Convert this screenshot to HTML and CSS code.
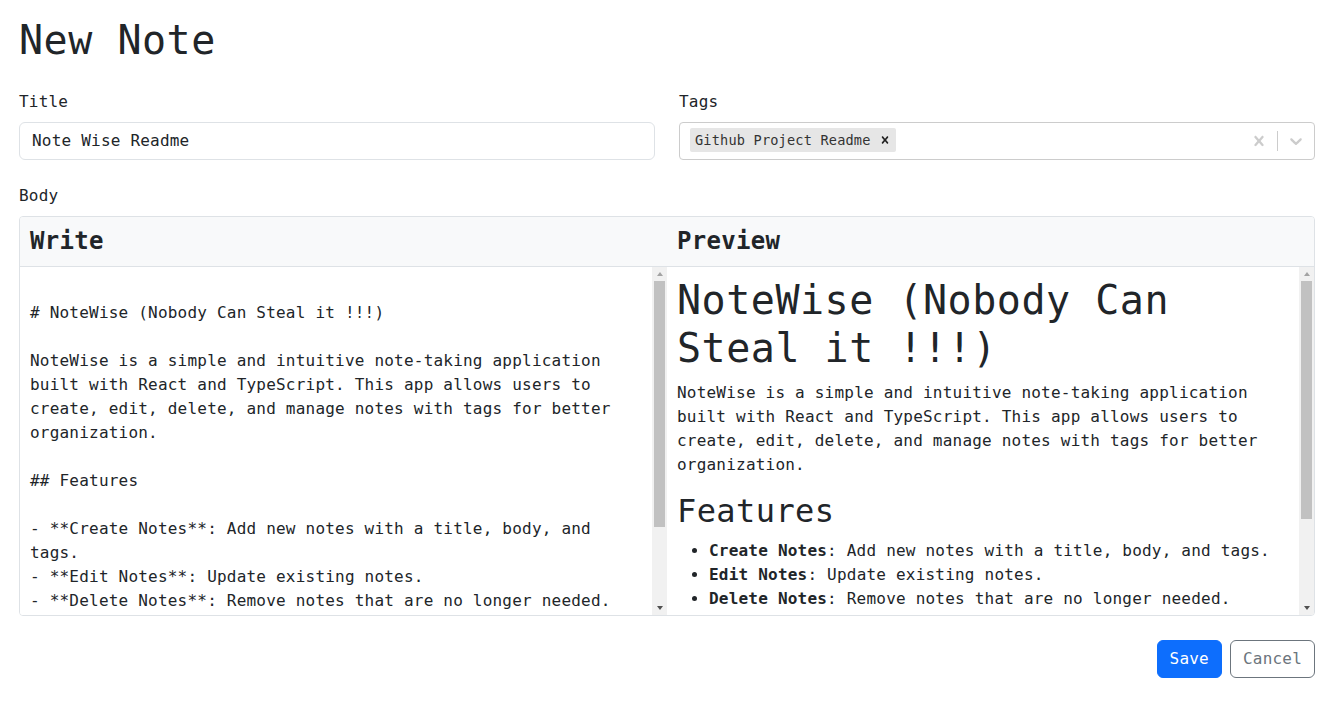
FILE: index.html
```html
<!DOCTYPE html>
<html lang="en">
<head>
<meta charset="utf-8">
<title>New Note</title>
<link rel="stylesheet" href="styles.css">
</head>
<body>
<main class="page">
  <h1 class="page-title">New Note</h1>
  <div class="fields">
    <div class="field">
      <label class="field-label">Title</label>
      <input class="text-input" type="text" value="Note Wise Readme">
    </div>
    <div class="field">
      <label class="field-label">Tags</label>
      <div class="select">
        <div class="select-values">
          <div class="chip">
            <span class="chip-label">Github Project Readme</span>
            <span class="chip-remove"><svg viewBox="0 0 20 20" width="14" height="14"><path d="M14.348 14.849c-0.469 0.469-1.229 0.469-1.697 0l-2.651-3.030-2.651 3.029c-0.469 0.469-1.229 0.469-1.697 0-0.469-0.469-0.469-1.229 0-1.697l2.758-3.15-2.759-3.152c-0.469-0.469-0.469-1.228 0-1.697s1.228-0.469 1.697 0l2.652 3.031 2.651-3.031c0.469-0.469 1.228-0.469 1.697 0s0.469 1.229 0 1.697l-2.758 3.152 2.758 3.15c0.469 0.469 0.469 1.229 0 1.698z"/></svg></span>
          </div>
        </div>
        <div class="select-indicators">
          <span class="indicator"><svg viewBox="0 0 20 20" width="20" height="20"><path d="M14.348 14.849c-0.469 0.469-1.229 0.469-1.697 0l-2.651-3.030-2.651 3.029c-0.469 0.469-1.229 0.469-1.697 0-0.469-0.469-0.469-1.229 0-1.697l2.758-3.15-2.759-3.152c-0.469-0.469-0.469-1.228 0-1.697s1.228-0.469 1.697 0l2.652 3.031 2.651-3.031c0.469-0.469 1.228-0.469 1.697 0s0.469 1.229 0 1.697l-2.758 3.152 2.758 3.150c0.469 0.469 0.469 1.229 0 1.698z"/></svg></span>
          <span class="separator"></span>
          <span class="indicator"><svg viewBox="0 0 20 20" width="20" height="20"><path d="M4.516 7.548c0.436-0.446 1.043-0.481 1.576 0l3.908 3.747 3.908-3.747c0.533-0.481 1.141-0.446 1.574 0 0.436 0.445 0.408 1.197 0 1.615-0.406 0.418-4.695 4.502-4.695 4.502-0.217 0.223-0.502 0.335-0.787 0.335s-0.57-0.112-0.789-0.335c0 0-4.287-4.084-4.695-4.502s-0.436-1.17 0-1.615z"/></svg></span>
        </div>
      </div>
    </div>
  </div>

  <label class="field-label">Body</label>
  <div class="editor">
    <div class="editor-head">
      <h4 class="pane-title">Write</h4>
      <h4 class="pane-title">Preview</h4>
    </div>
    <div class="editor-body">
      <div class="pane">
        <textarea class="source">

# NoteWise (Nobody Can Steal it !!!)

NoteWise is a simple and intuitive note-taking application built with React and TypeScript. This app allows users to create, edit, delete, and manage notes with tags for better organization.

## Features

- **Create Notes**: Add new notes with a title, body, and tags.
- **Edit Notes**: Update existing notes.
- **Delete Notes**: Remove notes that are no longer needed.
- **Tag Management**: Organize notes with tags.
- **Search Notes**: Filter notes by title and tags.</textarea>
        <div class="scrollbar">
          <span class="sb-btn"><span class="arrow-up"></span></span>
          <span class="sb-track"><span class="sb-thumb thumb-write"></span></span>
          <span class="sb-btn"><span class="arrow-down"></span></span>
        </div>
      </div>
      <div class="pane">
        <div class="preview">
          <h1>NoteWise (Nobody Can Steal it !!!)</h1>
          <p>NoteWise is a simple and intuitive note-taking application built with React and TypeScript. This app allows users to create, edit, delete, and manage notes with tags for better organization.</p>
          <h2>Features</h2>
          <ul>
            <li><strong>Create Notes</strong>: Add new notes with a title, body, and tags.</li>
            <li><strong>Edit Notes</strong>: Update existing notes.</li>
            <li><strong>Delete Notes</strong>: Remove notes that are no longer needed.</li>
            <li><strong>Tag Management</strong>: Organize notes with tags.</li>
            <li><strong>Search Notes</strong>: Filter notes by title and tags.</li>
          </ul>
        </div>
        <div class="scrollbar">
          <span class="sb-btn"><span class="arrow-up"></span></span>
          <span class="sb-track"><span class="sb-thumb thumb-preview"></span></span>
          <span class="sb-btn"><span class="arrow-down"></span></span>
        </div>
      </div>
    </div>
  </div>

  <div class="actions">
    <button class="btn btn-primary" type="button">Save</button>
    <button class="btn btn-outline" type="button">Cancel</button>
  </div>
</main>
</body>
</html>
```

FILE: styles.css
```css
* {
  box-sizing: border-box;
  letter-spacing: 0.013em;
}

html, body {
  margin: 0;
  padding: 0;
  background: #fff;
}

body {
  font-family: "DejaVu Sans Mono", "Liberation Mono", monospace;
  font-size: 16px;
  line-height: 24px;
  color: #212529;
}

.page {
  width: 1315px;
  padding: 16px 0 0 19px;
}

.page-title {
  margin: 0 0 26px;
  font-size: 40px;
  line-height: 48px;
  font-weight: 400;
}

.fields {
  display: grid;
  grid-template-columns: 1fr 1fr;
  column-gap: 24px;
  margin-bottom: 24px;
}

.field {
  display: flex;
  flex-direction: column;
}

.field-label {
  display: block;
  margin-bottom: 8px;
  font-size: 16px;
  line-height: 24px;
}

.text-input {
  height: 38px;
  padding: 5px 12px 7px;
  border: 1px solid #dee2e6;
  border-radius: 6px;
  font-family: inherit;
  font-size: 16px;
  line-height: 24px;
  color: #212529;
  background: #fff;
}

.select {
  height: 38px;
  display: flex;
  align-items: center;
  border: 1px solid #cccccc;
  border-radius: 4px;
  background: #fff;
}

.select-values {
  flex: 1;
  display: flex;
  align-items: center;
  padding: 0 8px 2px;
}

.chip {
  display: flex;
  align-items: center;
  height: 24px;
  margin: 2px;
  background: #e6e6e6;
  border-radius: 2px;
}

.chip-label {
  padding: 3px 3px 3px 5px;
  font-size: 13.6px;
  line-height: 18px;
  color: #333;
}

.chip-remove {
  display: flex;
  align-items: center;
  padding: 0 4px;
  height: 100%;
  fill: #222;
}

.select-indicators {
  display: flex;
  align-items: center;
  align-self: stretch;
}

.indicator {
  display: flex;
  padding: 8px;
  fill: #cccccc;
}

.separator {
  width: 1px;
  align-self: stretch;
  margin: 8px 0;
  background: #cccccc;
}

.editor {
  border: 1px solid #dee2e6;
  border-radius: 4px;
  overflow: hidden;
}

.editor-head {
  display: grid;
  grid-template-columns: 1fr 1fr;
  height: 50px;
  background: #f8f9fa;
  border-bottom: 1px solid #dee2e6;
}

.pane-title {
  margin: 0;
  padding: 0 10px;
  font-size: 24px;
  line-height: 48px;
  font-weight: 700;
}

.editor-body {
  display: grid;
  grid-template-columns: 1fr 1fr;
  height: 348px;
}

.pane {
  display: flex;
  height: 348px;
  min-width: 0;
}

.source {
  display: block;
  flex: 1;
  min-width: 0;
  height: 348px;
  margin: 0;
  padding: 10px 10px 9px;
  border: none;
  outline: none;
  resize: none;
  font-family: inherit;
  font-size: 16px;
  line-height: 24px;
  color: #212529;
  background: #fff;
  overflow: hidden;
}

.preview {
  flex: 1;
  min-width: 0;
  height: 348px;
  padding: 9px 10px;
  overflow: hidden;
}

.preview h1 {
  margin: 0 0 9px;
  font-size: 40px;
  line-height: 48px;
  font-weight: 400;
}

.preview p {
  margin: 0 0 15px;
}

.preview h2 {
  margin: 0 0 9px;
  font-size: 32px;
  line-height: 38px;
  font-weight: 400;
}

.preview ul {
  margin: 0 0 16px;
  padding-left: 32px;
}

.preview strong {
  font-weight: 700;
}

/* drawn classic scrollbar */
.scrollbar {
  flex: 0 0 15px;
  display: flex;
  flex-direction: column;
  background: #f1f1f1;
}

.sb-btn {
  flex: 0 0 14px;
  display: flex;
  align-items: center;
  justify-content: center;
}

.sb-track {
  flex: 1;
  display: flex;
  flex-direction: column;
  padding: 0 2px;
}

.sb-thumb {
  display: block;
  background: #c1c1c1;
}

.thumb-write {
  height: 246px;
}

.thumb-preview {
  height: 238px;
}

.arrow-up {
  width: 0;
  height: 0;
  border-left: 3.5px solid transparent;
  border-right: 3.5px solid transparent;
  border-bottom: 4px solid #a3a3a3;
}

.arrow-down {
  width: 0;
  height: 0;
  border-left: 3.5px solid transparent;
  border-right: 3.5px solid transparent;
  border-top: 4px solid #505050;
}

.actions {
  display: flex;
  justify-content: flex-end;
  gap: 8px;
  margin-top: 24px;
}

.btn {
  height: 38px;
  padding: 6px 12px;
  border-radius: 6px;
  font-family: inherit;
  font-size: 16px;
  line-height: 24px;
  cursor: pointer;
}

.btn-primary {
  background: #0d6efd;
  border: 1px solid #0d6efd;
  color: #fff;
}

.btn-outline {
  background: #fff;
  border: 1px solid #6c757d;
  color: #6c757d;
}
```
